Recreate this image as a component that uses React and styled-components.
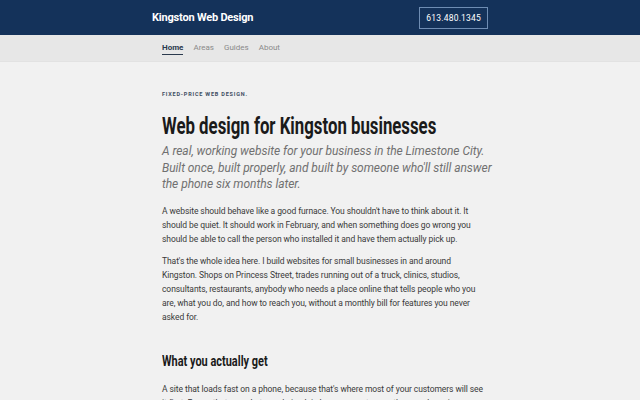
import React from "react"
import styled, { createGlobalStyle } from "styled-components"

const GlobalStyle = createGlobalStyle`
  html, body {
    margin: 0;
    padding: 0;
    background: #f1f1f1;
  }
  body {
    font-family: Roboto, "Liberation Sans", sans-serif;
    color: #2b2b2b;
  }
`

const Header = styled.header`
  background: #14325a;
  height: 35px;
  display: flex;
  align-items: center;
  justify-content: space-between;
  padding: 0 152px;
`

const Brand = styled.a`
  font-weight: 700;
  font-size: 11px;
  letter-spacing: -0.2px;
  color: #fff;
  text-decoration: none;
`

const Phone = styled.a`
  border: 1px solid #6f8db3;
  color: #fff;
  font-size: 8.5px;
  padding: 5px 6px;
  text-decoration: none;
  letter-spacing: 0.2px;
`

const Nav = styled.nav`
  background: #e7e7e7;
  height: 26px;
  display: flex;
  align-items: center;
  gap: 10px;
  padding: 0 162px;
  border-bottom: 1px solid #e2e2e2;
`

const NavLink = styled.a`
  font-size: 8px;
  color: ${p => (p.$active ? "#2b3a4e" : "#8a8a8a")};
  font-weight: ${p => (p.$active ? 700 : 400)};
  text-decoration: none;
  padding: 2px 0;
  border-bottom: 1px solid ${p => (p.$active ? "#2b3a4e" : "transparent")};
`

const Main = styled.main`
  width: 325px;
  padding: 29px 0 0 162px;
`

const Eyebrow = styled.div`
  font-size: 5.5px;
  font-weight: 700;
  letter-spacing: 0.8px;
  color: #3e4d62;
  text-transform: uppercase;
`

/* no condensed face is installed, so the bold headings are narrowed */
const Condensed = styled.span`
  display: inline-block;
  white-space: nowrap;
  transform: scaleX(0.73);
  transform-origin: left center;
`

const Title = styled.h1`
  font-weight: 700;
  font-size: 23px;
  color: #1a1a1a;
  margin: 16px 0 0;
  line-height: 28px;
  white-space: nowrap;
`

const Lede = styled.p`
  font-style: italic;
  font-size: 12px;
  line-height: 16.5px;
  letter-spacing: -0.05px;
  color: #707070;
  margin: 2px -9px 11px 0;
`

const Body = styled.p`
  font-size: 8.5px;
  line-height: 14px;
  letter-spacing: -0.08px;
  color: #3a3a3a;
  margin: 0 0 8px;
`

const Sub = styled.h2`
  font-weight: 700;
  font-size: 15px;
  line-height: 18px;
  color: #1a1a1a;
  margin: 28px 0 12px;
`

export default function App() {
  return (
    <>
      <GlobalStyle />
      <Header>
        <Brand href="#">Kingston Web Design</Brand>
        <Phone href="#">613.480.1345</Phone>
      </Header>
      <Nav>
        <NavLink $active href="#">Home</NavLink>
        <NavLink href="#">Areas</NavLink>
        <NavLink href="#">Guides</NavLink>
        <NavLink href="#">About</NavLink>
      </Nav>
      <Main>
        <Eyebrow>Fixed-price web design.</Eyebrow>
        <Title>
          <Condensed>Web design for Kingston businesses</Condensed>
        </Title>
        <Lede>
          A real, working website for your business in the Limestone City.
          Built once, built properly, and built by someone who'll still answer
          the phone six months later.
        </Lede>
        <Body>
          A website should behave like a good furnace. You shouldn't have to
          think about it. It should be quiet. It should work in February, and
          when something does go wrong you should be able to call the person
          who installed it and have them actually pick up.
        </Body>
        <Body>
          That's the whole idea here. I build websites for small businesses in
          and around Kingston. Shops on Princess Street, trades running out of
          a truck, clinics, studios, consultants, restaurants, anybody who
          needs a place online that tells people who you are, what you do, and
          how to reach you, without a monthly bill for features you never
          asked for.
        </Body>
        <Sub>
          <Condensed>What you actually get</Condensed>
        </Sub>
        <Body>
          A site that loads fast on a phone, because that's where most of your
          customers will see it first. Pages that say what you do in plain
          language, set up so the search engines can understand them too.
        </Body>
      </Main>
    </>
  )
}
